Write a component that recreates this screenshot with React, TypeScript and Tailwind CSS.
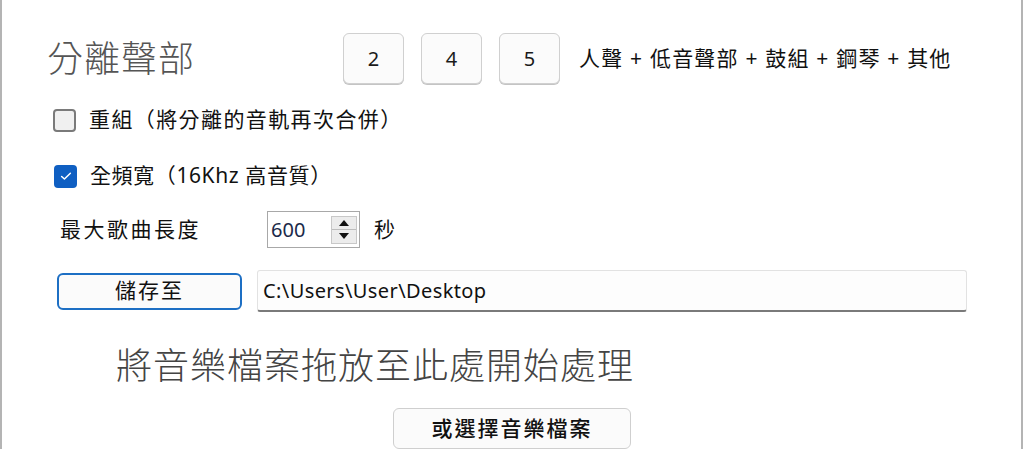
import React from "react";

const FONT = { fontFamily: '"Noto Sans", "Noto Sans CJK TC", sans-serif' };

function StemButton({ n }: { n: number }) {
  return (
    <button
      type="button"
      className="flex h-[51px] w-[61px] items-center justify-center rounded-[6px] border border-[#d0d0d0] bg-[#fbfbfb] text-[20px] text-[#1a1a1a] shadow-[0_1px_0_#c4c4c4]"
    >
      {n}
    </button>
  );
}

function Checkbox({ checked }: { checked: boolean }) {
  if (checked) {
    return (
      <span className="flex h-[23px] w-[23px] items-center justify-center rounded-[4px] bg-[#0f5fc2]">
        <svg width="14" height="14" viewBox="0 0 16 16" fill="none">
          <path d="M3 8.5l3.2 3L13 4.8" stroke="white" strokeWidth="1.7" strokeLinecap="round" strokeLinejoin="round" />
        </svg>
      </span>
    );
  }
  return <span className="h-[23px] w-[23px] rounded-[4px] border-2 border-[#7a7a7a] bg-[#f0f0f0]" />;
}

export default function App() {
  return (
    <div
      className="flex h-[449px] w-[1023px] flex-col overflow-hidden border-l-2 border-r-2 border-[#b4b4b4] bg-white text-[#111]"
      style={FONT}
    >
      {/* stems */}
      <div className="mt-[33px] flex h-[51px] items-center">
        <div className="w-[341px] pl-[45px] text-[36px] font-light leading-none tracking-[1px] text-[#555]">分離聲部</div>
        <div className="flex gap-[17px]">
          <StemButton n={2} />
          <StemButton n={4} />
          <StemButton n={5} />
        </div>
        <div className="ml-[19px] text-[21px] tracking-[1.2px] text-[#111]">人聲 + 低音聲部 + 鼓組 + 鋼琴 + 其他</div>
      </div>

      <div className="mt-[16px] flex h-[40px] items-center gap-[13px] pl-[51px]">
        <Checkbox checked={false} />
        <span className="text-[21px] tracking-[1.4px]">重組（將分離的音軌再次合併）</span>
      </div>

      <div className="mt-[16px] flex h-[40px] items-center gap-[13px] pl-[52px]">
        <Checkbox checked />
        <span className="text-[21px] tracking-[0.6px]">全頻寬（16Khz 高音質）</span>
      </div>

      <div className="mt-[15px] flex h-[37px] items-center pl-[58px]">
        <span className="w-[207px] text-[21px] tracking-[2.5px]">最大歌曲長度</span>
        <div className="flex h-[37px] w-[93px] items-center border border-[#a8a8a8] bg-white pl-[3px] pr-[2px]">
          <span className="flex-1 text-[20px] text-[#1b2a4a]">600</span>
          <div className="flex h-[28px] w-[26px] flex-col border border-[#c8c8c8] bg-[#ececec]">
            <div className="flex flex-1 items-center justify-center border-b border-[#bdbdbd]">
              <svg width="10" height="6" viewBox="0 0 10 6"><path d="M5 0L10 6H0z" fill="#111" /></svg>
            </div>
            <div className="flex flex-1 items-center justify-center">
              <svg width="10" height="6" viewBox="0 0 10 6"><path d="M0 0H10L5 6z" fill="#111" /></svg>
            </div>
          </div>
        </div>
        <span className="ml-[14px] text-[21px]">秒</span>
      </div>

      <div className="mt-[22px] flex h-[42px] items-center pl-[55px]">
        <button
          type="button"
          className="flex h-[37px] w-[185px] items-center justify-center rounded-[6px] border-2 border-[#1d6fc4] bg-[#fbfbfb] text-[21px] tracking-[2px]"
        >
          儲存至
        </button>
        <div className="ml-[15px] flex h-[42px] w-[710px] items-center rounded-[3px] border border-[#e2e2e2] border-b-2 border-b-[#7a7a7a] bg-[#fdfdfd] pl-[5px] text-[20px] tracking-[0.4px]">
          C:\Users\User\Desktop
        </div>
      </div>

      <div className="mt-[32px] flex h-[44px] items-center pl-[114px] text-[36px] font-light tracking-[1px] text-[#444]">
        將音樂檔案拖放至此處開始處理
      </div>

      <div className="mt-[20px] flex pl-[391px]">
        <button
          type="button"
          className="flex h-[41px] w-[238px] items-center justify-center rounded-[6px] border border-[#cfcfcf] bg-[#fbfbfb] text-[21px] font-medium tracking-[2px]"
        >
          或選擇音樂檔案
        </button>
      </div>
    </div>
  );
}
